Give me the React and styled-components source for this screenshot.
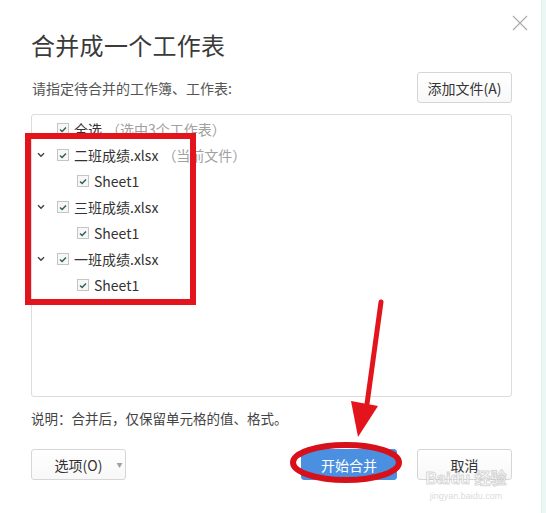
import React from "react";
import styled, { createGlobalStyle } from "styled-components";

const GlobalStyle = createGlobalStyle`
  html, body {
    margin: 0;
    padding: 0;
    background: #ffffff;
  }
  body {
    font-family: "Noto Sans CJK SC", "Noto Sans", "Liberation Sans", sans-serif;
    color: #333;
  }
`;

const Page = styled.div`
  position: relative;
  width: 546px;
  height: 513px;
  display: flex;
  overflow: hidden;
  background: #fff;
`;

const Dialog = styled.div`
  width: 541px;
  height: 510px;
  box-sizing: border-box;
  padding: 15px 29px 0 31px;
  display: flex;
  flex-direction: column;
  background: #fff;
`;

const EdgeStrip = styled.div`
  flex: 1;
  background: #ebf7f5;
  border-left: 1px solid #e2efed;
`;

const Header = styled.div`
  display: flex;
  justify-content: space-between;
  align-items: flex-start;
`;

const Title = styled.h1`
  margin: 14px 0 0;
  font-size: 24px;
  line-height: 32px;
  font-weight: 400;
  color: #3a3a3a;
  letter-spacing: 0.3px;
`;

const CloseButton = styled.button`
  width: 16px;
  height: 16px;
  margin-right: -16px;
  padding: 0;
  border: none;
  background: none;
  display: flex;
  cursor: pointer;
`;

const LabelRow = styled.div`
  margin-top: 11px;
  height: 31px;
  display: flex;
  align-items: center;
  justify-content: space-between;
`;

const Label = styled.span`
  font-size: 14px;
  color: #555;
  padding-left: 1px;
`;

const Button = styled.button`
  position: relative;
  width: ${({ $w }) => $w || 95}px;
  height: 31px;
  box-sizing: border-box;
  border: 1px solid ${({ $primary }) => ($primary ? "#4a8fe0" : "#d6d6d6")};
  border-radius: 3px;
  background: ${({ $primary }) =>
    $primary ? "#4a8fe0" : "linear-gradient(#ffffff, #f8f8f8)"};
  color: ${({ $primary }) => ($primary ? "#fff" : "#333")};
  font-family: inherit;
  font-size: 14px;
  display: flex;
  align-items: center;
  justify-content: center;
  gap: 14px;
  padding: 0;
  cursor: pointer;
`;

const Caret = styled.span`
  font-size: 6px;
  color: #a0a0a0;
  margin-right: -20px;
`;

const ListBox = styled.div`
  margin-top: 11px;
  height: 283px;
  box-sizing: border-box;
  border: 1px solid #dcdcdc;
  border-radius: 3px;
  padding-top: 1px;
  display: flex;
  flex-direction: column;
`;

const Row = styled.div`
  height: 26px;
  display: flex;
  align-items: center;
  padding-left: ${({ $level }) => 5 + $level * 20}px;
  font-size: 14px;
  color: #333;
  white-space: nowrap;
`;

const Chevron = styled.span`
  width: 17px;
  margin-left: -25px;
  margin-right: 8px;
  display: flex;
  align-items: center;
  justify-content: center;
`;

const Check = styled.span`
  width: 12px;
  height: 12px;
  box-sizing: border-box;
  border: 1px solid #c4c4c4;
  background: #f6f7f6;
  display: flex;
  align-items: center;
  justify-content: center;
  margin-right: 5px;
  flex-shrink: 0;
`;

const Hint = styled.span`
  color: #a0a0a0;
  margin-left: 4px;
`;

const Note = styled.p`
  margin: 11px 0 0;
  font-size: 13.5px;
  line-height: 20px;
  color: #444;
`;

const Footer = styled.div`
  margin-top: 21px;
  display: flex;
  align-items: center;
  gap: 20px;
`;

const Spacer = styled.div`
  flex: 1;
`;

const Overlay = styled.svg`
  position: absolute;
  left: 0;
  top: 0;
  pointer-events: none;
`;

const Watermark = styled.div`
  position: absolute;
  left: 418px;
  top: 470px;
  width: 96px;
  display: flex;
  flex-direction: column;
  align-items: center;
  pointer-events: none;
  white-space: nowrap;
  font-family: "Liberation Sans", "Noto Sans CJK SC", sans-serif;
`;

const MarkBig = styled.div`
  font-size: 16px;
  font-weight: 700;
  line-height: 18px;
  color: rgba(255, 255, 255, 0.8);
  -webkit-text-stroke: 1px rgba(175, 175, 175, 0.5);
`;

const MarkSmall = styled.div`
  font-size: 9px;
  line-height: 11px;
  color: rgba(185, 185, 185, 0.55);
  margin-top: 3px;
`;

const CheckMark = () => (
  <svg width="8" height="7" viewBox="0 0 8 7">
    <path d="M1 3.6 L3.1 5.6 L7 1.4" fill="none" stroke="#2f5f55" strokeWidth="1.4" />
  </svg>
);

const ChevronIcon = () => (
  <svg width="8" height="6" viewBox="0 0 8 6">
    <path d="M1 1.2 L4 4.2 L7 1.2" fill="none" stroke="#444" strokeWidth="1.5" />
  </svg>
);

const files = [
  { name: "二班成绩.xlsx", hint: "（当前文件）" },
  { name: "三班成绩.xlsx" },
  { name: "一班成绩.xlsx" },
];

export default function App() {
  return (
    <>
      <GlobalStyle />
      <Page>
        <Dialog>
          <Header>
            <Title>合并成一个工作表</Title>
            <CloseButton aria-label="关闭">
              <svg width="16" height="16" viewBox="0 0 16 16">
                <path d="M1 1 L15 15 M15 1 L1 15" stroke="#a8a8a8" strokeWidth="1.1" />
              </svg>
            </CloseButton>
          </Header>

          <LabelRow>
            <Label>请指定待合并的工作簿、工作表:</Label>
            <Button>添加文件(A)</Button>
          </LabelRow>

          <ListBox>
            <Row $level={1}>
              <Check>
                <CheckMark />
              </Check>
              全选<Hint>（选中3个工作表）</Hint>
            </Row>
            {files.map((f) => (
              <React.Fragment key={f.name}>
                <Row $level={1}>
                  <Chevron>
                    <ChevronIcon />
                  </Chevron>
                  <Check>
                    <CheckMark />
                  </Check>
                  {f.name}
                  {f.hint && <Hint>{f.hint}</Hint>}
                </Row>
                <Row $level={2}>
                  <Check>
                    <CheckMark />
                  </Check>
                  Sheet1
                </Row>
              </React.Fragment>
            ))}
          </ListBox>

          <Note>说明：合并后，仅保留单元格的值、格式。</Note>

          <Footer>
            <Button>
              选项(O)
              <Caret>▼</Caret>
            </Button>
            <Spacer />
            <Button $primary $w={96}>
              开始合并
            </Button>
            <Button>取消</Button>
          </Footer>
        </Dialog>
        <EdgeStrip />

        <Watermark>
          <MarkBig>Baidu 经验</MarkBig>
          <MarkSmall>jingyan.baidu.com</MarkSmall>
        </Watermark>

        <Overlay width="546" height="513" viewBox="0 0 546 513">
          <rect x="28" y="136" width="165" height="166" fill="none" stroke="#e3141c" strokeWidth="6" />
          <path d="M381 302 L367 404" stroke="#e3141c" strokeWidth="5" strokeLinecap="round" />
          <polygon points="351,401 378,406 358,437" fill="#e3141c" />
          <ellipse cx="346" cy="462.5" rx="53" ry="17.5" fill="none" stroke="#d8101a" strokeWidth="6" />
        </Overlay>
      </Page>
    </>
  );
}
